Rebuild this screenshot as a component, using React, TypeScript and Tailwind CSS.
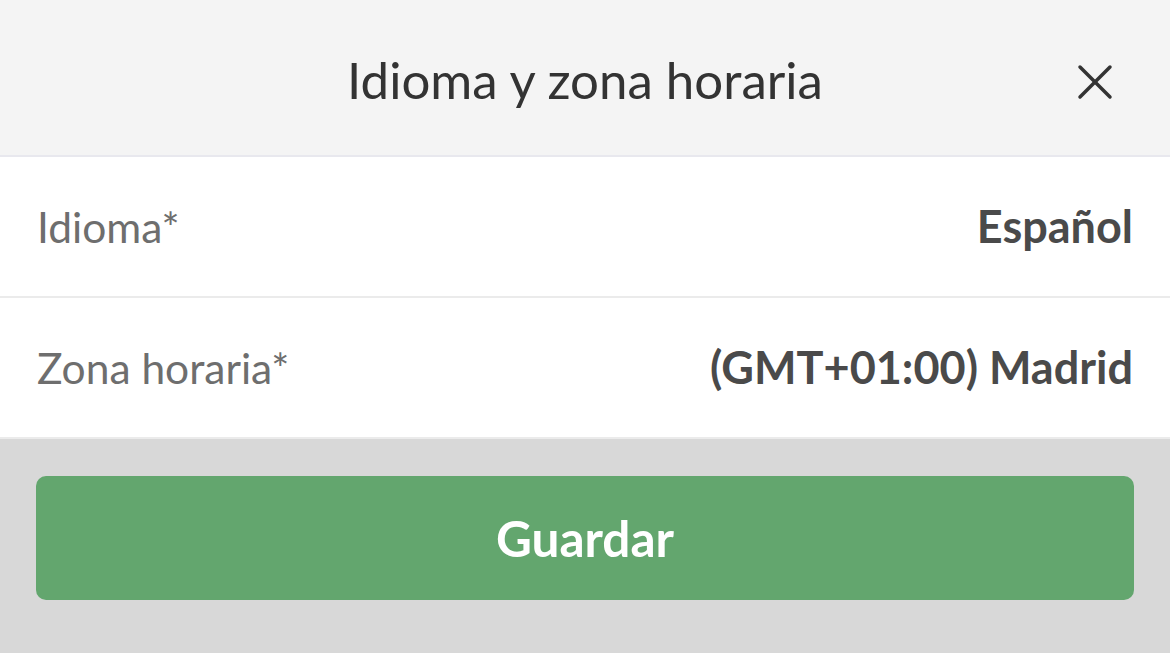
import { X } from 'lucide-react';

const rows = [
  { label: 'Idioma*', value: 'Español' },
  { label: 'Zona horaria*', value: '(GMT+01:00) Madrid' },
];

export default function App() {
  return (
    <div className="flex h-[653px] w-[1170px] flex-col bg-[#d8d8d8] font-['Lato',sans-serif]">
      <div className="relative flex h-[157px] items-center justify-center border-b-2 border-[#e8e8ee] bg-[#f4f4f4] pt-[6px]">
        <h1 className="text-[51px] text-[#333333]">Idioma y zona horaria</h1>
        <button className="absolute left-[1065px] top-[52px] text-[#333333]">
          <X size={60} strokeWidth={1.4} />
        </button>
      </div>

      {rows.map((row) => (
        <div
          key={row.label}
          className="flex h-[141px] items-center justify-between border-b-2 border-[#ebebeb] bg-white px-[37px]"
        >
          <span className="text-[42.5px] text-[#6e6e6e]">{row.label}</span>
          <span className="text-[45px] font-bold text-[#4a4a4a]">{row.value}</span>
        </div>
      ))}

      <div className="px-[36px] pt-[37px]">
        <button className="flex h-[124px] w-full items-center justify-center rounded-[10px] bg-[#63a66e] text-[49.5px] font-bold text-white">
          Guardar
        </button>
      </div>
    </div>
  );
}
